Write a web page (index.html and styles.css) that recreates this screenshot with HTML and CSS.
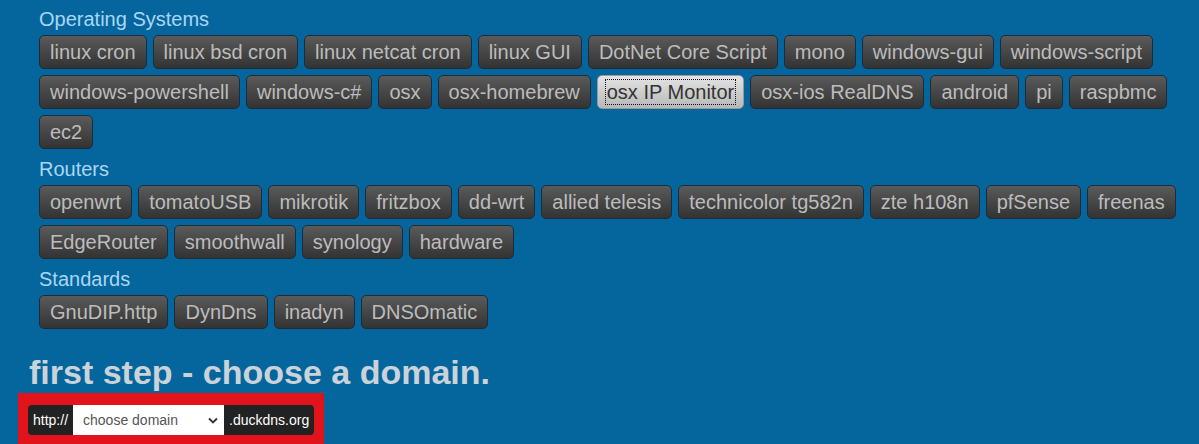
FILE: index.html
```html
<!DOCTYPE html>
<html lang="en">
<head>
    <meta charset="UTF-8">
    <meta name="viewport" content="width=device-width, initial-scale=1.0">
    <title>Duck DNS - install</title>
    <link rel="stylesheet" href="styles.css">
</head>
<body>
    <div class="container">
        <!-- Platform picker -->
        <div class="platforms">
            <h4 class="group-title">Operating Systems</h4>
            <div class="btn-row">
                <button class="btn">linux cron</button>
                <button class="btn">linux bsd cron</button>
                <button class="btn">linux netcat cron</button>
                <button class="btn">linux GUI</button>
                <button class="btn">DotNet Core Script</button>
                <button class="btn">mono</button>
                <button class="btn">windows-gui</button>
                <button class="btn">windows-script</button>
                <button class="btn">windows-powershell</button>
                <button class="btn">windows-c#</button>
                <button class="btn">osx</button>
                <button class="btn">osx-homebrew</button>
                <button class="btn active"><span class="focus-ring">osx IP Monitor</span></button>
                <button class="btn">osx-ios RealDNS</button>
                <button class="btn">android</button>
                <button class="btn">pi</button>
                <button class="btn">raspbmc</button>
                <button class="btn">ec2</button>
            </div>

            <h4 class="group-title">Routers</h4>
            <div class="btn-row">
                <button class="btn">openwrt</button>
                <button class="btn">tomatoUSB</button>
                <button class="btn">mikrotik</button>
                <button class="btn">fritzbox</button>
                <button class="btn">dd-wrt</button>
                <button class="btn">allied telesis</button>
                <button class="btn">technicolor tg582n</button>
                <button class="btn">zte h108n</button>
                <button class="btn">pfSense</button>
                <button class="btn">freenas</button>
                <button class="btn">EdgeRouter</button>
                <button class="btn">smoothwall</button>
                <button class="btn">synology</button>
                <button class="btn">hardware</button>
            </div>

            <h4 class="group-title">Standards</h4>
            <div class="btn-row">
                <button class="btn">GnuDIP.http</button>
                <button class="btn">DynDns</button>
                <button class="btn">inadyn</button>
                <button class="btn">DNSOmatic</button>
            </div>
        </div>

        <!-- Step one -->
        <h2 class="step-title">first step - choose a domain.</h2>
        <div class="domain-box">
            <div class="input-group">
                <span class="addon addon-left">http://</span>
                <div class="select-wrap">
                    <select class="domain-select">
                        <option>choose domain</option>
                    </select>
                    <svg class="chevron" width="10" height="7" viewBox="0 0 10 7">
                        <path d="M1 1.5 L5 5.5 L9 1.5" fill="none" stroke="#333" stroke-width="1.8"/>
                    </svg>
                </div>
                <span class="addon addon-right">.duckdns.org</span>
            </div>
        </div>
    </div>
</body>
</html>
```

FILE: styles.css
```css
/* General Styles */
html, body {
    margin: 0;
    padding: 0;
}
body {
    background-color: #05669d;
    font-family: "Liberation Sans", Arial, sans-serif;
    overflow: hidden;
}
.container {
    padding: 6px 0 0 29px;
}

/* Platform buttons */
.platforms {
    padding-left: 10px;
}
.group-title {
    margin: 0 0 3px 0;
    font-size: 20px;
    line-height: 26px;
    font-weight: normal;
    color: #a9d6f5;
}
.btn-row {
    display: flex;
    flex-wrap: wrap;
    gap: 6px 6px;
    margin-bottom: 7px;
}
.btn {
    height: 34px;
    padding: 0 10px;
    font-family: inherit;
    font-size: 20px;
    color: #bcbcbc;
    background: linear-gradient(to bottom, #5a5a5a, #333);
    border: 1px solid #1d2c38;
    border-radius: 5px;
    cursor: pointer;
}
.btn.active {
    padding: 0 7px;
    color: #333;
    background: linear-gradient(to bottom, #e4e4e4, #b8b8b8);
    border-color: #9a9a9a;
}
.focus-ring {
    display: inline-block;
    padding: 0 1px;
    line-height: 24px;
    border: 1px dotted #111;
}

/* Step one */
.step-title {
    margin: 24px 0 2px 0;
    font-size: 34px;
    line-height: 38px;
    font-weight: bold;
    color: #cbd3da;
}
.domain-box {
    display: inline-block;
    padding: 12px 10px;
    margin-left: -11px;
    background-color: #e2141b;
}
.input-group {
    display: flex;
    height: 30px;
    font-size: 14px;
}
.addon {
    display: flex;
    align-items: center;
    padding: 0 5px;
    color: #fff;
    background-color: #222;
}
.addon-left {
    border-radius: 4px 0 0 4px;
}
.addon-right {
    border-radius: 0 4px 4px 0;
}
.select-wrap {
    position: relative;
    width: 151px;
    background-color: #fff;
}
.domain-select {
    width: 100%;
    height: 100%;
    padding: 0 0 0 10px;
    font-family: inherit;
    font-size: 14px;
    color: #555;
    background: transparent;
    border: none;
    appearance: none;
    -webkit-appearance: none;
}
.chevron {
    position: absolute;
    right: 6px;
    top: 12px;
    pointer-events: none;
}
```
